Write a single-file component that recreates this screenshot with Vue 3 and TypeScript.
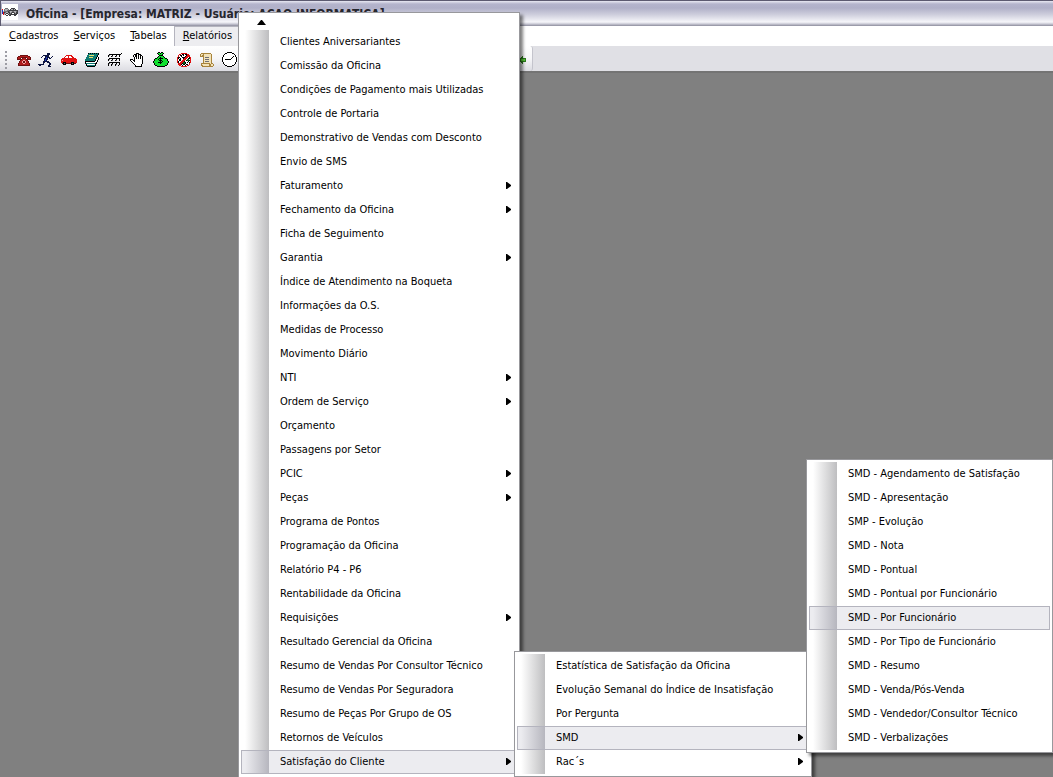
<script setup lang="ts">
interface Entry {
  label: string
  sub?: boolean
  active?: boolean
}

interface Panel {
  id: string
  name: string
  scroll?: boolean
  entries: Entry[]
}

interface Glyph {
  name: string
  rows: string[]
}

const title = 'Oficina - [Empresa: MATRIZ - Usuário: ACAO INFORMATICA]'
const menus = ['Cadastros', 'Serviços', 'Tabelas', 'Relatórios']

const plain = (...labels: string[]): Entry[] => labels.map((label) => ({ label }))
const branch = (label: string, active = false): Entry => ({ label, sub: true, active })

const panels: Panel[] = [
  {
    id: 'reports',
    name: 'Relatórios',
    scroll: true,
    entries: [
      ...plain(
        'Clientes Aniversariantes',
        'Comissão da Oficina',
        'Condições de Pagamento mais Utilizadas',
        'Controle de Portaria',
        'Demonstrativo de Vendas com Desconto',
        'Envio de SMS',
      ),
      branch('Faturamento'),
      branch('Fechamento da Oficina'),
      ...plain('Ficha de Seguimento'),
      branch('Garantia'),
      ...plain(
        'Índice de Atendimento na Boqueta',
        'Informações da O.S.',
        'Medidas de Processo',
        'Movimento Diário',
      ),
      branch('NTI'),
      branch('Ordem de Serviço'),
      ...plain('Orçamento', 'Passagens por Setor'),
      branch('PCIC'),
      branch('Peças'),
      ...plain(
        'Programa de Pontos',
        'Programação da Oficina',
        'Relatório P4 - P6',
        'Rentabilidade da Oficina',
      ),
      branch('Requisições'),
      ...plain(
        'Resultado Gerencial da Oficina',
        'Resumo de Vendas Por Consultor Técnico',
        'Resumo de Vendas Por Seguradora',
        'Resumo de Peças Por Grupo de OS',
        'Retornos de Veículos',
      ),
      branch('Satisfação do Cliente', true),
    ],
  },
  {
    id: 'satisfaction',
    name: 'Satisfação do Cliente',
    entries: [
      ...plain(
        'Estatística de Satisfação da Oficina',
        'Evolução Semanal do Índice de Insatisfação',
        'Por Pergunta',
      ),
      branch('SMD', true),
      branch('Rac´s'),
    ],
  },
  {
    id: 'smd',
    name: 'SMD',
    entries: [
      ...plain(
        'SMD - Agendamento de Satisfação',
        'SMD - Apresentação',
        'SMP - Evolução',
        'SMD - Nota',
        'SMD - Pontual',
        'SMD - Pontual por Funcionário',
      ),
      { label: 'SMD - Por Funcionário', active: true },
      ...plain(
        'SMD - Por Tipo de Funcionário',
        'SMD - Resumo',
        'SMD - Venda/Pós-Venda',
        'SMD - Vendedor/Consultor Técnico',
        'SMD - Verbalizações',
      ),
    ],
  },
]

const palette: Record<string, string> = {
  K: '#000000',
  E: '#3c3c40',
  G: '#6f6f73',
  H: '#b4b4b8',
  W: '#ffffff',
  R: '#e01010',
  M: '#b01c1c',
  D: '#6c1010',
  P: '#f5a0a0',
  N: '#0c1440',
  B: '#2038c0',
  T: '#0e7a72',
  Y: '#e8e070',
  L: '#10e030',
  F: '#0a6a18',
  C: '#f2e2b8',
  O: '#a8843c',
}

const tools: Glyph[] = [
  {
    name: 'Telefone',
    rows: [
      '................',
      '................',
      '................',
      '.....DDDDDDDD...',
      '...DDMMMMMMMMDD.',
      '..DMMMDDDDDDMMMD',
      '..DMMD.DMMD.DMMD',
      '..DDDDDMMMMDDDDD',
      '.....DMMPPMMD...',
      '....DMMPDDPMMD..',
      '....DMMPDDPMMD..',
      '...DMMMMPPMMMMD.',
      '...DMMMMMMMMMMD.',
      '...DDDDDDDDDDDD.',
      '................',
      '................',
    ],
  },
  {
    name: 'Corredor',
    rows: [
      '................',
      '.........NNN....',
      '.........NNN....',
      '.....NNNNNN.....',
      '....N..NNNN...N.',
      '...N...NBNNN.N..',
      '......NNBN.NN...',
      '......NBNN......',
      '......NBN.......',
      '.....NNNNNN.....',
      '.....NN..NNN....',
      '.....N.....NN...',
      'NNNNNN.....NN...',
      '.NN.......NN....',
      '..........NNN...',
      '................',
    ],
  },
  {
    name: 'Veículo',
    rows: [
      '................',
      '................',
      '................',
      '.....RRRRRR.....',
      '....RWWRWWRR....',
      '...RWWWRWWWRR...',
      '.RRRRRRRRRRRRRR.',
      'RRRRRRRRRRRRRRRR',
      'RPRRRRRRRRRRRRRR',
      'RRRRRRRRRRRRRRRR',
      'RRKKKRRRRRKKKRRR',
      '.DKGKDDDDDKGKDD.',
      '..KKK.....KKK...',
      '................',
      '................',
      '................',
    ],
  },
  {
    name: 'Agenda',
    rows: [
      '................',
      '....KTKTKTKTKTK.',
      '....TTTTTTTTTTK.',
      '...TTYYYYYTTTK..',
      '...TTTTTTTTTTK..',
      '..TTTYYYYTTTKWK.',
      '..TTTTTTTTTTKWK.',
      '.TTTTTTTTTTKWWK.',
      '.TTTTTTTTTTKWK..',
      '.KKKKKKKKKKWWK..',
      '.KWWWWWWWWWWK...',
      '.KTTTTTTTTTKK...',
      '..KWWWWWWWWK....',
      '..KTTTTTTTTK....',
      '...KKKKKKKK.....',
      '................',
    ],
  },
  {
    name: 'Grade',
    rows: [
      '................',
      '..............K.',
      '..KKKKKKKKKKKK..',
      '.KG..K...K..K...',
      '.K..KG..KG..K...',
      '................',
      '..KKKKKKKKKKK...',
      '.KG..K...K..K...',
      '.K..KG..KG..K...',
      '................',
      '..KKKKKKKKKKK...',
      '.KG..K...K..K...',
      '.K..KG..KG..K...',
      '.K..K...K..K....',
      '................',
      '................',
    ],
  },
  {
    name: 'Mão',
    rows: [
      '................',
      '......KKK.......',
      '....KKKWKKK.....',
      '...KWKKWKWKK....',
      '...KWKKWKWKWK...',
      '....KWKWKWKWK...',
      '....KWKWKWKWK...',
      'KKK.KWWWWWWWK...',
      'KWWKKWWWWWWWK...',
      '.KWWKWWWWWWWK...',
      '..KWWWWWWWWWK...',
      '...KWWWWWWWWK...',
      '....KWWWWWWK....',
      '.....KWWWWWK....',
      '.....KKKKKKK....',
      '................',
    ],
  },
  {
    name: 'Dinheiro',
    rows: [
      '.....KK.KK......',
      '....KLLKLLK.....',
      '.....KLLLK......',
      '......KKKK......',
      '.....KLLLLK.....',
      '....KLLKLLLK....',
      '..KKLLKKKKLLKK..',
      '.KLLLKLKLLLLLLK.',
      '.KLLLLKKKLLLLLK.',
      'KLLLLLLKLKLLLLLK',
      'KLLLLKKKKLLLLLLK',
      '.KLLLLLKLLLLLLK.',
      '.KLLLLLLLLLLLLK.',
      '..KKLLLLLLLLKK..',
      '....KKKKKKKK....',
      '................',
    ],
  },
  {
    name: 'Bloqueio',
    rows: [
      '................',
      '.....RRRRRR.....',
      '...RRWKKWKKRR...',
      '..RWKKWKWWKRRR..',
      '..RWWKWWWKRRRR..',
      '.RKKWWKKKRRRWKR.',
      '.RKWKWWKRRRWKKR.',
      '.RWKKWWRRRWFFWR.',
      '.RWKKWRRRWKFFKR.',
      '.RKWWRRRKWWWKWR.',
      '.RKWRRRFFKWKWKR.',
      '..RRRRKFFKWWWR..',
      '..RRRKWKKWKKWR..',
      '...RRWKWWKWRR...',
      '.....RRRRRR.....',
      '................',
    ],
  },
  {
    name: 'Relatório',
    rows: [
      '................',
      '..OOOOOOOOOO....',
      '.OCCOCCCCCCCO...',
      '.OCOOCCCCCCCO...',
      '.OOOOCCCCCCCO...',
      '....OCGGGGCCO...',
      '....OCCCCCCCO...',
      '....OCGGGGCCO...',
      '....OCCCCCCCO...',
      '....OCGGGGCCO...',
      '....OCCCCCCCO...',
      '..OOOOOOOOOCOO..',
      '..OCCCCCCCOOCCO.',
      '..OOCCCCCCOOCCO.',
      '...OOOOOOOOOOO..',
      '................',
    ],
  },
  {
    name: 'Relógio',
    rows: [
      '.....KKKKK......',
      '...KKWWWWWKK....',
      '..KWWWWWWWWWK...',
      '.KWWWWWWWWWWWK..',
      '.KWWWWWWWWWKWK..',
      'KWWWWWWWWWKWWWK.',
      'KWWWWWWWWKWWWWK.',
      'KWWKKKKKKWWWWWK.',
      'KWWWWWWWWWWWWWK.',
      'KWWWWWWWWWWWWWK.',
      '.KWWWWWWWWWWWK..',
      '.KWWWWWWWWWWWK..',
      '..KWWWWWWWWWK...',
      '...KKWWWWWKK....',
      '.....KKKKK......',
      '................',
    ],
  },
]

const appIcon: string[] = [
  'WWWWWWWWWWWWWWWW',
  'WWWWWWWWWWWWWWWW',
  'WWWWWWWWWWWWWWWW',
  'WWWWWWWWWWWWWWWW',
  'WWWGGGWWWEEEEWWW',
  'RWGHHHGWEHHEHEWW',
  'BWGHHGGEEEEEEEEE',
  'BHGGGGEGHHGGHHGE',
  'BREGHHEEHGEEGHEE',
  'BRGHEEHEGEWWEGEE',
  'WRHEWWEGEEEEEEEW',
  'WWWWEEWEEWWWEEWW',
  'WWWWWWWWWWWWWWWW',
  'WWWWWWWWWWWWWWWW',
  'WWWWWWWWWWWWWWWW',
  'WWWWWWWWWWWWWWWW',
]

// Collects the cells of each colour into one path.
function trace(rows: string[]): { fill: string; d: string }[] {
  const paths: Record<string, string> = {}
  rows.forEach((row, y) => {
    ;[...row].forEach((key, x) => {
      if (key !== '.') paths[key] = (paths[key] ?? '') + `M${x} ${y}h1v1h-1z`
    })
  })
  return Object.entries(paths).map(([key, d]) => ({ fill: palette[key], d }))
}
</script>

<template>
  <div class="app">
    <header class="titlebar">
      <svg class="glyph" viewBox="0 0 16 16" aria-hidden="true">
        <path v-for="p in trace(appIcon)" :key="p.fill" :fill="p.fill" :d="p.d" />
      </svg>
      <h1>{{ title }}</h1>
    </header>

    <nav class="menubar" aria-label="Menu principal">
      <button
        v-for="m in menus"
        :key="m"
        type="button"
        class="menu"
        :class="{ open: m === 'Relatórios' }"
      ><u>{{ m[0] }}</u>{{ m.slice(1) }}</button>
    </nav>

    <div class="dock">
      <div class="toolbar">
        <span class="grip"><i v-for="n in 5" :key="n"></i></span>
        <button v-for="t in tools" :key="t.name" type="button" class="tool" :aria-label="t.name">
          <svg class="glyph" viewBox="0 0 16 16" aria-hidden="true">
            <path v-for="p in trace(t.rows)" :key="p.fill" :fill="p.fill" :d="p.d" />
          </svg>
        </button>
        <button type="button" class="tool exit" aria-label="Sair">
          <svg class="glyph" viewBox="0 0 16 16" aria-hidden="true">
            <path fill="#2c7c1c" d="M5 8l5-4v2h3v4h-3v2z" />
            <path fill="#58c838" d="M7 8l2-2v1h3v2h-3v1z" />
          </svg>
        </button>
      </div>
    </div>

    <main class="workspace"></main>

    <ul v-for="panel in panels" :key="panel.id" class="panel" :class="panel.id" :aria-label="panel.name">
      <li v-if="panel.scroll">
        <button type="button" class="scroll" aria-label="Rolar para cima">
          <svg class="up" viewBox="0 0 9 5" aria-hidden="true"><path d="M0 5L4 0h1l4 5z" /></svg>
        </button>
      </li>
      <li v-for="e in panel.entries" :key="e.label">
        <button type="button" class="entry" :class="{ active: e.active }">
          <span>{{ e.label }}</span>
          <svg v-if="e.sub" class="more" viewBox="0 0 5 8" aria-hidden="true"><path d="M0 0h1l4 3v1l-4 3h-1z" /></svg>
        </button>
      </li>
    </ul>
  </div>
</template>

<style>
body {
  margin: 0;
  background: #808080;
}
</style>

<style scoped>
.app {
  position: relative;
  display: flex;
  flex-direction: column;
  height: 100vh;
  overflow: hidden;
  font: 11px/16px "DejaVu Sans Condensed", Tahoma, sans-serif;
  color: #000;
}

button {
  margin: 0;
  border: 0;
  background: none;
  font: inherit;
  color: inherit;
}

.glyph {
  display: block;
  width: 16px;
  height: 16px;
  shape-rendering: crispEdges;
}

.titlebar {
  display: flex;
  gap: 8px;
  box-sizing: border-box;
  height: 26px;
  padding: 3px 1px;
  border-top: 1px solid #5c5a70;
  border-left: 1px solid #5c5a70;
  background: linear-gradient(#e8e8f2 0, #b4b4cc 3px, #b0b0c8 7px, #d0d0de 14px, #f6f6fa 21px, #c8c8d4 23px, #8c8c9c 25px);
}

.titlebar h1 {
  margin: 0;
  font: bold 12px/20px "DejaVu Sans Condensed", "Trebuchet MS", sans-serif;
  white-space: nowrap;
  color: #26262e;
}

.menubar {
  display: flex;
  height: 20px;
  padding-left: 1px;
  background: #fff;
}

.menu {
  padding: 0 7px 1px 8px;
  white-space: nowrap;
}

.menu.open {
  border: 1px solid #b4b4be;
  border-bottom: 0;
  background: #ededf0;
}

.dock {
  display: flex;
  box-sizing: border-box;
  height: 27px;
  border-bottom: 2px solid #747474;
  background: #e0e0e5;
}

.toolbar {
  display: flex;
  align-items: center;
  width: 533px;
  padding-top: 2px;
  box-sizing: border-box;
  border-right: 1px solid #c4c4cc;
  border-radius: 0 3px 3px 0;
  background: linear-gradient(#fff, #f6f6f8 50%, #dcdce2);
}

.grip {
  display: grid;
  gap: 2px;
  width: 6px;
  padding-left: 5px;
}

.grip i {
  width: 2px;
  height: 2px;
  background: #9c9ca4;
}

.tool {
  width: 23px;
  padding: 3px 3px 3px 4px;
}

.exit {
  margin-left: auto;
}

.workspace {
  flex: 1;
  background: #808080;
}

.panel {
  position: absolute;
  box-sizing: border-box;
  margin: 0;
  padding: 2px;
  list-style: none;
  border: 1px solid #98989c;
  background: #fff;
  box-shadow: 3px 3px 3px rgba(0, 0, 0, 0.5);
}

.panel.reports {
  top: 12px;
  left: 238px;
  width: 282px;
  height: 100%;
  padding-top: 0;
}

.panel.satisfaction {
  top: 651px;
  left: 514px;
  width: 298px;
}

.panel.smd {
  top: 459px;
  left: 806px;
  width: 247px;
}

.scroll {
  display: block;
  width: 42px;
  height: 17px;
  padding: 2px 0 0 16px;
}

.up {
  display: block;
  width: 9px;
  height: 5px;
}

.entry {
  display: flex;
  align-items: center;
  justify-content: space-between;
  box-sizing: border-box;
  width: 100%;
  height: 24px;
  padding: 0 6px 0 39px;
  background: linear-gradient(90deg, #fff 4px, #bebec0 28px, #fff 28px);
  text-align: left;
  white-space: nowrap;
}

.entry.active {
  padding: 0 5px 0 38px;
  border: 1px solid #b4b4be;
  background: linear-gradient(90deg, #ececf0 3px, #b6b6be 27px, #ececf0 27px);
}

.more {
  width: 5px;
  height: 8px;
}
</style>
